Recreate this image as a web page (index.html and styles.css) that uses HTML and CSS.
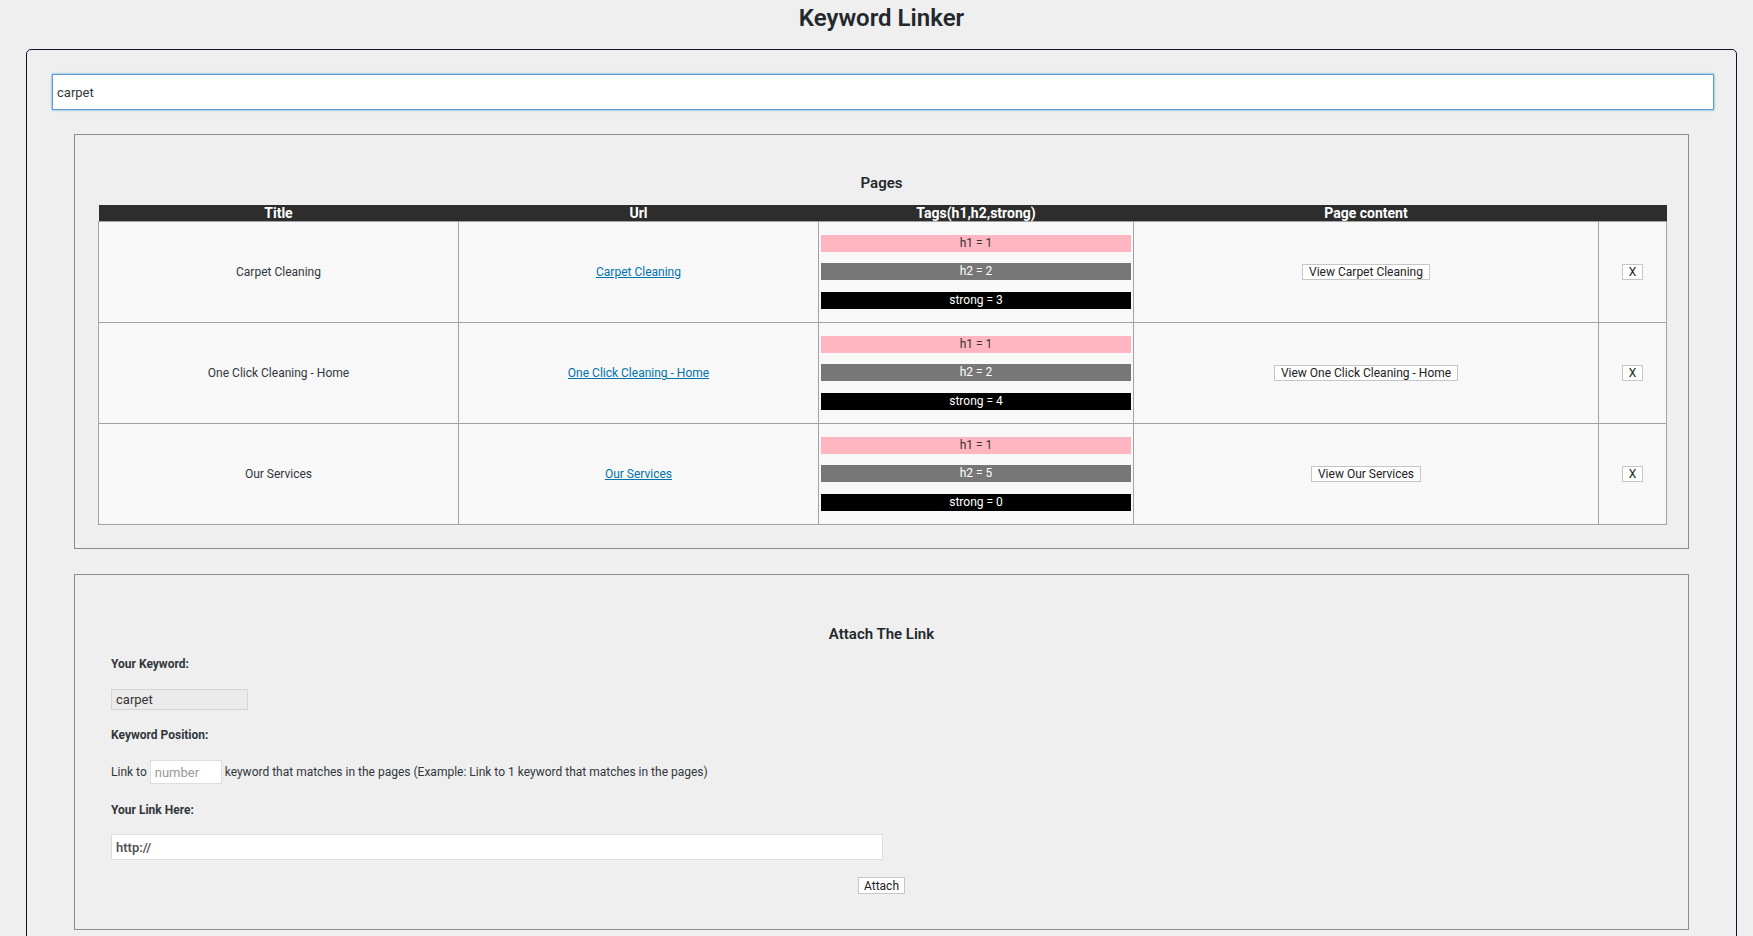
FILE: index.html
```html
<!DOCTYPE html>
<html>
<head>
    <title>Keyword Linker</title>
    <link rel="stylesheet" href="styles.css">
</head>
<body>
    <div class="wrap">
        <h1 class="page-title">Keyword Linker</h1>
        <div class="container">
            <input type="text" class="search" value="carpet">

            <div class="box pages">
                <h3 class="box-title">Pages</h3>
                <table class="pages-table">
                    <colgroup>
                        <col class="c-title"><col class="c-url"><col class="c-tags"><col class="c-content"><col class="c-del">
                    </colgroup>
                    <thead>
                        <tr><th>Title</th><th>Url</th><th>Tags(h1,h2,strong)</th><th>Page content</th><th></th></tr>
                    </thead>
                    <tbody>
                        <tr>
                            <td>Carpet Cleaning</td>
                            <td><a href="#">Carpet Cleaning</a></td>
                            <td class="tags">
                                <div class="tag h1">h1 = 1</div>
                                <div class="tag h2">h2 = 2</div>
                                <div class="tag strong">strong = 3</div>
                            </td>
                            <td><button class="btn">View Carpet Cleaning</button></td>
                            <td><button class="btn">X</button></td>
                        </tr>
                        <tr>
                            <td>One Click Cleaning - Home</td>
                            <td><a href="#">One Click Cleaning - Home</a></td>
                            <td class="tags">
                                <div class="tag h1">h1 = 1</div>
                                <div class="tag h2">h2 = 2</div>
                                <div class="tag strong">strong = 4</div>
                            </td>
                            <td><button class="btn">View One Click Cleaning - Home</button></td>
                            <td><button class="btn">X</button></td>
                        </tr>
                        <tr>
                            <td>Our Services</td>
                            <td><a href="#">Our Services</a></td>
                            <td class="tags">
                                <div class="tag h1">h1 = 1</div>
                                <div class="tag h2">h2 = 5</div>
                                <div class="tag strong">strong = 0</div>
                            </td>
                            <td><button class="btn">View Our Services</button></td>
                            <td><button class="btn">X</button></td>
                        </tr>
                    </tbody>
                </table>
            </div>

            <div class="box attach">
                <h3 class="box-title">Attach The Link</h3>
                <label class="lbl">Your Keyword:</label>
                <input type="text" class="keyword" value="carpet" disabled>
                <label class="lbl">Keyword Position:</label>
                <div class="position">
                    Link to <input type="text" class="num" placeholder="number"> keyword that matches in the pages (Example: Link to 1 keyword that matches in the pages)
                </div>
                <label class="lbl">Your Link Here:</label>
                <input type="text" class="link" value="http://">
                <div class="actions"><button class="btn">Attach</button></div>
            </div>
        </div>
    </div>
</body>
</html>
```

FILE: styles.css
```css
body { margin: 0; background: #efefef; font-family: Roboto, "Noto Sans", Arial, sans-serif; font-size: 13px; color: #23282d; }
.wrap { margin: 0 16px 0 26px; }
.page-title { margin: 0; padding: 3px 0 0; height: 49px; box-sizing: border-box; text-align: center; font-size: 24px; line-height: 30px; font-weight: 600; color: #23282d; }
.container { border: 1px solid #10132e; border-radius: 5px; padding: 24px 22px 40px 25px; }
.search { display: block; width: 100%; box-sizing: border-box; height: 36px; margin: 0; padding: 0 4px; border: 1px solid #5b9dd9; box-shadow: 0 0 2px rgba(30,140,190,.8); background: #fff; font: 13px Roboto, Arial, sans-serif; color: #32373c; outline: none; }
.box { border: 1px solid #8c8c8c; margin: 24px 25px 0 22px; }
.box-title { margin: 0; text-align: center; font-size: 15px; line-height: 20px; font-weight: 600; color: #23282d; }

.pages { padding: 38px 23px 23px 23px; margin-top: 24px; }
.pages .box-title { margin-bottom: 12px; }
.pages-table { width: 100%; border-collapse: collapse; table-layout: fixed; }
.c-title, .c-url { width: 360px; }
.c-tags { width: 315px; }
.c-content { width: 465px; }
.c-del { width: 68px; }
.pages-table th { background: #2d2d2d; color: #fff; font-size: 14px; font-weight: 700; line-height: 16px; padding: 0; text-align: center; }
.pages-table td { background: #f8f8f8; border: 1px solid #a3a3a3; height: 100px; padding: 0; text-align: center; vertical-align: middle; font-size: 12px; color: #32373c; }
.pages-table a { color: #0073aa; }
.pages-table td.tags { padding: 0 2px 0 2px; }
.tag { height: 17px; line-height: 17px; font-size: 12px; text-align: center; }
.tag + .tag { margin-top: 11px; }
.tag.strong { margin-top: 12px; }
.tag.h1 { background: #ffb6c1; color: #333; }
.tag.h2 { background: #777; color: #fff; }
.tag.strong { background: #000; color: #fff; }
.btn { background: #fff; border: 1px solid #c6c6c6; border-radius: 0; font: 12px Roboto, Arial, sans-serif; color: #222; height: 16px; line-height: 14px; padding: 0 6px; }

.attach { margin-top: 25px; padding: 49px 36px 35px; }
.lbl { display: block; margin-top: 12px; font-size: 12px; font-weight: 700; line-height: 16px; color: #32373c; }
.attach .lbl ~ .lbl { margin-top: 17px; }
.attach .lbl:last-of-type { margin-top: 18px; }
.keyword { display: block; margin-top: 17px; width: 137px; height: 21px; box-sizing: border-box; padding: 0 4px; border: 1px solid #d6d6d6; background: #ebebeb; font: 13px Roboto, Arial, sans-serif; color: #333; }
.position { margin-top: 17px; font-size: 12px; line-height: 24px; color: #32373c; }
.num { width: 72px; height: 24px; box-sizing: border-box; padding: 0 4px; border: 1px solid #ddd; background: #fff; font: 13px Roboto, Arial, sans-serif; vertical-align: top; margin: 0; }
.num::placeholder { color: #999; }
.link { display: block; margin-top: 16px; width: 772px; height: 26px; box-sizing: border-box; padding: 0 4px; border: 1px solid #ddd; background: #fff; font: 600 13px Roboto, Arial, sans-serif; color: #555; }
.actions { margin-top: 17px; text-align: center; }
.actions .btn { height: 17px; padding: 0 5px; }
```
